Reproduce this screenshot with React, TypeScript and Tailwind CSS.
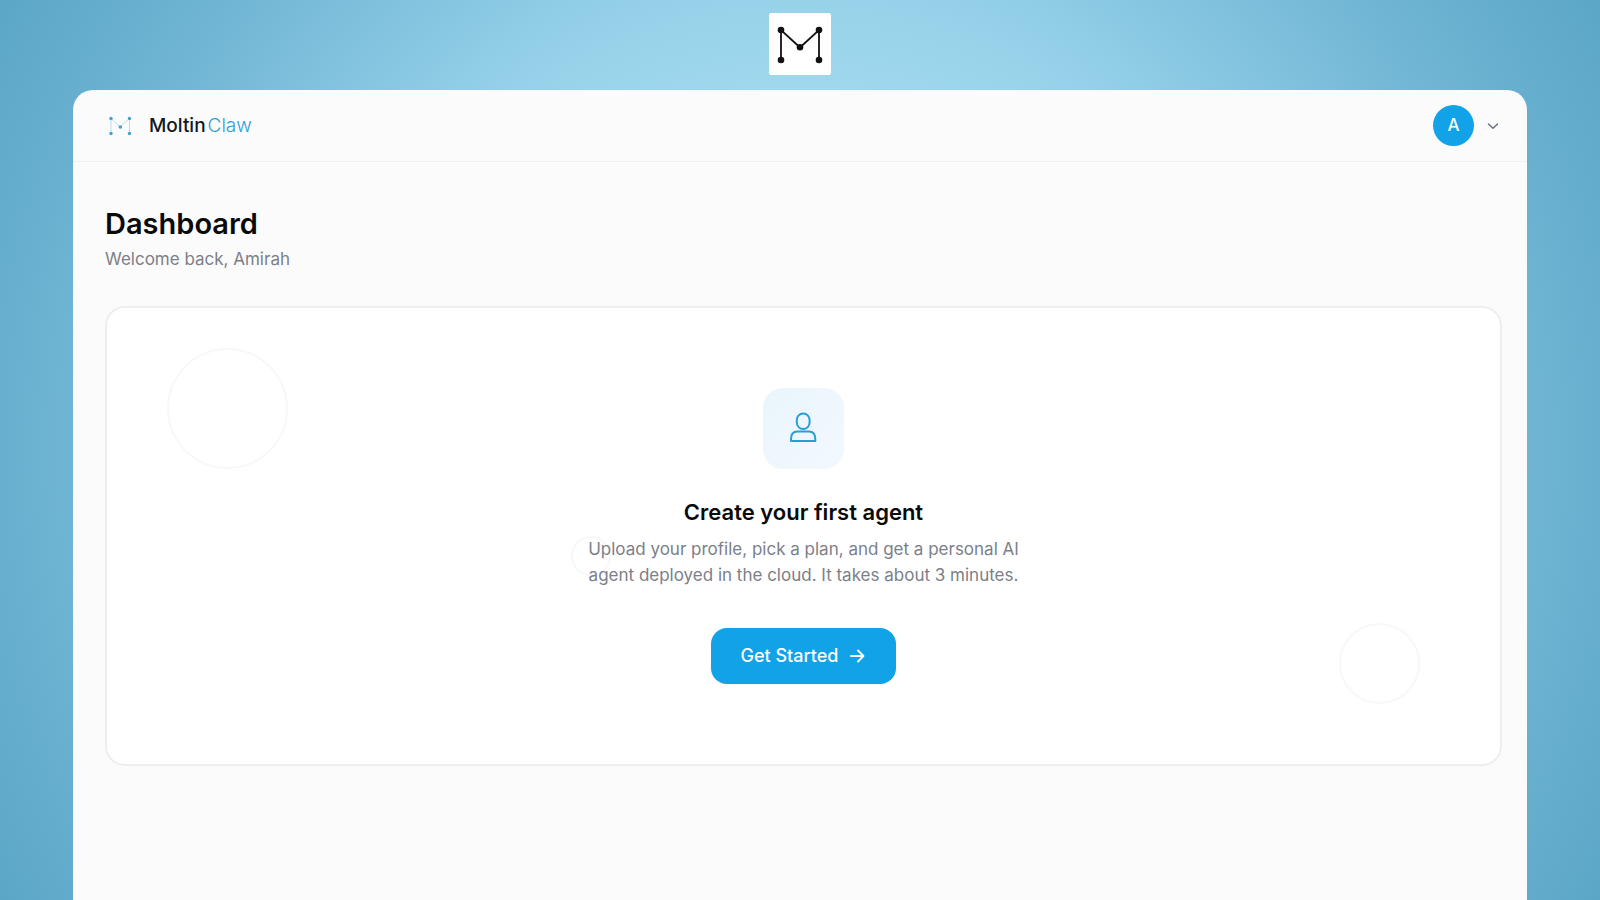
import React from "react";

function AgentMark() {
  return (
    <svg viewBox="0 0 62 62" className="size-full" aria-hidden="true">
      <path d="M12 47V17L31 34.500L50 17V47" stroke="#111" strokeWidth="1.800" fill="none" />
      <g fill="#111">
        <circle cx="12" cy="17" r="3.300" />
        <circle cx="50" cy="17" r="3.300" />
        <circle cx="31" cy="34.300" r="3.300" />
        <circle cx="12" cy="47" r="3.300" />
        <circle cx="50" cy="47" r="3.300" />
      </g>
    </svg>
  );
}

function BrandMark() {
  return (
    <svg viewBox="0 0 24 24" className="size-6" aria-hidden="true">
      <path d="M2 19.500V4.500L11.300 13L20.500 4.500V19.500" stroke="#9ed3ea" strokeWidth="0.700" fill="none" />
      <g fill="#3da3cf">
        <circle cx="2" cy="4.500" r="1.700" />
        <circle cx="20.500" cy="4.500" r="1.700" />
        <circle cx="11.300" cy="13" r="1.800" />
        <circle cx="2" cy="19.500" r="1.700" />
        <circle cx="20.500" cy="19.500" r="1.700" />
      </g>
    </svg>
  );
}

function Header() {
  return (
    <header className="flex h-[72px] items-center justify-between border-b border-[#f1f1f2] pr-[27px] pl-9">
      <a href="#" className="flex items-center gap-4 text-[19px] leading-[30px]">
        <BrandMark />
        <span className="flex gap-0.5">
          <span className="font-medium text-[#111827]">Moltin</span>
          <span className="font-light text-[#2fa0d4]">Claw</span>
        </span>
      </a>
      <button type="button" aria-label="Account menu" className="flex items-center gap-3">
        <span className="flex size-[41px] items-center justify-center rounded-full bg-[#12a2e8] text-[17px] font-medium text-white">
          A
        </span>
        <svg viewBox="0 0 14 14" className="size-3.5" fill="none" stroke="#6b7280" strokeWidth="1.500" strokeLinecap="round" strokeLinejoin="round" aria-hidden="true">
          <path d="M2.500 5L7 9.300L11.500 5" />
        </svg>
      </button>
    </header>
  );
}

function EmptyState() {
  return (
    <section className="relative isolate flex flex-col items-center rounded-[20px] border-2 border-[#eeeeef] bg-white py-20 text-center">
      <span className="absolute top-10 left-15 -z-10 size-[121px] rounded-full border-2 border-[#f8f8f8]" />
      <span className="absolute right-20 bottom-15 -z-10 size-[81px] rounded-full border-2 border-[#f8f8f8]" />
      <span className="absolute top-1/2 left-1/3 -z-10 size-10 rounded-full border-2 border-[#f8f8f8]" />
      <div className="flex size-[81px] items-center justify-center rounded-[20px] bg-gradient-to-br from-[#e9f5fc] to-[#f3f9fe]">
        <svg viewBox="0 0 29 33" className="h-[33px] w-[29px]" fill="none" stroke="#259fd6" strokeWidth="2" strokeLinejoin="round" aria-hidden="true">
          <rect x="7.800" y="1.500" width="12.800" height="15.500" rx="6.400" />
          <path d="M2 29V27C2 22.500 4.300 19.500 8.300 19.500H20C24 19.500 26.300 22.500 26.300 27V29Z" />
        </svg>
      </div>
      <h2 className="mt-[27px] text-[22px] leading-8 font-semibold text-[#0a0a0a]">Create your first agent</h2>
      <p className="mt-2 max-w-[450px] text-[17px] leading-[26px] text-[#7b8089]">
        Upload your profile, pick a plan, and get a personal AI agent deployed in the cloud. It takes about 3 minutes.
      </p>
      <button type="button" className="mt-10 flex h-14 items-center gap-3 rounded-2xl bg-[#12a2e8] px-[30px] text-lg font-medium text-white shadow-xs">
        Get Started
        <svg viewBox="0 0 16 16" className="size-4" fill="none" stroke="currentColor" strokeWidth="1.800" strokeLinecap="round" strokeLinejoin="round" aria-hidden="true">
          <path d="M1 8H13.500M8 2.500L13.500 8L8 13.500" />
        </svg>
      </button>
    </section>
  );
}

export default function App() {
  return (
    <div className="flex min-h-screen flex-col items-center bg-[radial-gradient(circle_at_center,#a0d9ee_38%,#97d2ea_49%,#70b5d4_79%,#5ba6c7_100%)] px-[73px] pt-[13px] font-['Inter',sans-serif]">
      <div className="size-[62px] rounded-xs bg-white">
        <AgentMark />
      </div>
      <div className="mt-[15px] flex w-full grow flex-col rounded-t-[20px] bg-[#fbfbfb]">
        <Header />
        <main className="pt-11 pr-[25px] pb-10 pl-8">
          <h1 className="text-[29px] leading-9 font-semibold text-[#0a0a0a]">Dashboard</h1>
          <p className="mt-1 mb-[34px] text-[17px] leading-[26px] text-[#7b8089]">Welcome back, Amirah</p>
          <EmptyState />
        </main>
      </div>
    </div>
  );
}
